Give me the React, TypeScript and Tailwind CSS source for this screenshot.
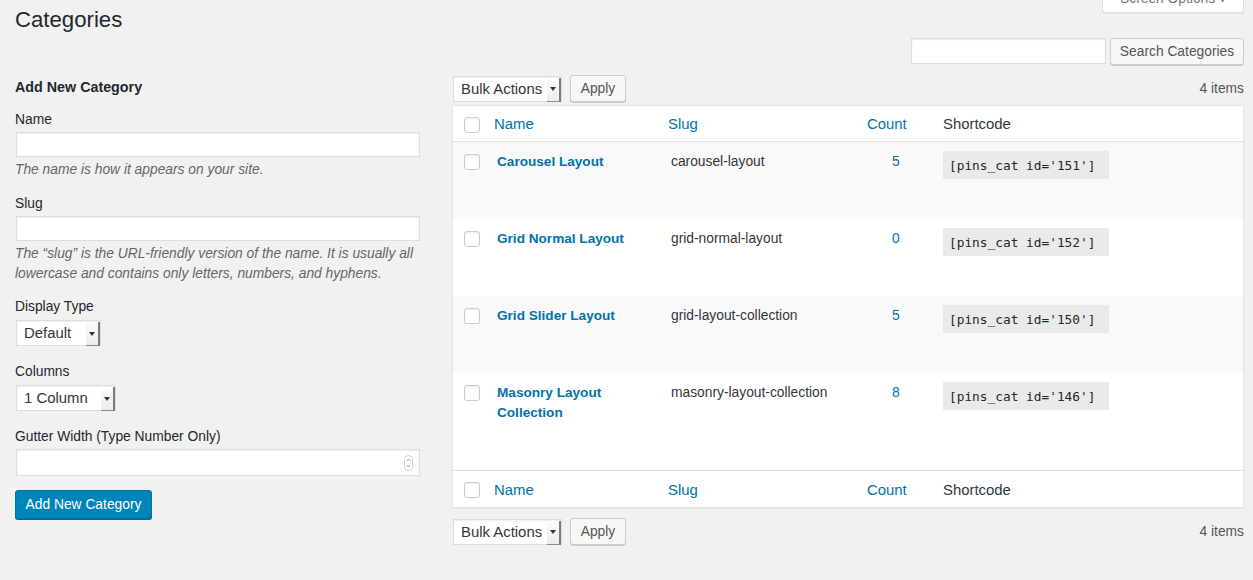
import React from "react";

const FONT = "font-['Liberation_Sans',Arial,sans-serif]";

function Select({ width, label }: { width: string; label: string }) {
  return (
    <div className={`flex h-[26px] ${width} bg-white border border-[#ddd] shadow-[inset_0_1px_2px_rgba(0,0,0,0.07)]`}>
      <div className="flex-1 flex items-center pl-[7px] pt-[1px] text-[14.9px] text-[#32373c] whitespace-nowrap">{label}</div>
      <div className="w-[14px] h-full flex items-center justify-center bg-gradient-to-b from-[#fcfcfc] to-[#ececec] border-r-2 border-b border-r-[#7a7a7a] border-b-[#8a8a8a] mt-[1px]">
        <svg width="6" height="4" viewBox="0 0 6 4">
          <path d="M0 0 L6 0 L3 4 Z" fill="#333" />
        </svg>
      </div>
    </div>
  );
}

function Button({ children, className = "" }: { children: React.ReactNode; className?: string }) {
  return (
    <button className={`h-[27px] pt-[1px] bg-[#f7f7f7] border border-[#ccc] rounded-[3px] shadow-[0_1px_0_#ccc] text-[13.8px] text-[#555] flex items-center justify-center whitespace-nowrap ${className}`}>
      {children}
    </button>
  );
}

function Checkbox() {
  return <div className="w-[16px] h-[16px] bg-white border border-[#c9cccf] rounded-[3px] shadow-[inset_0_1px_2px_rgba(0,0,0,0.08)]" />;
}

const rows = [
  { name: ["Carousel Layout"], slug: "carousel-layout", count: "5", id: "151" },
  { name: ["Grid Normal Layout"], slug: "grid-normal-layout", count: "0", id: "152" },
  { name: ["Grid Slider Layout"], slug: "grid-layout-collection", count: "5", id: "150" },
  { name: ["Masonry Layout", "Collection"], slug: "masonry-layout-collection", count: "8", id: "146" },
];

const GRID = "grid grid-cols-[33px_174px_198px_76px_1fr]";

function HeaderRow({ border }: { border: "top" | "bottom" }) {
  return (
    <div className={`${GRID} items-center text-[14.9px] ${border === "bottom" ? "h-[36px] pt-[2px] border-b border-[#e1e1e1]" : "h-[37px] pt-[2px] border-t border-[#e1e1e1]"}`}>
      <div className="pl-[11px] flex items-center"><Checkbox /></div>
      <div className="pl-[8px] text-[#0073aa]">Name</div>
      <div className="pl-[8px] text-[#0073aa]">Slug</div>
      <div className="pl-[9px] text-[#0073aa]">Count</div>
      <div className="pl-[9px] text-[#32373c]">Shortcode</div>
    </div>
  );
}

function TableNav({ className = "" }: { className?: string }) {
  return (
    <div className={`flex items-center ${className}`}>
      <div className="ml-px"><Select width="w-[109px]" label="Bulk Actions" /></div>
      <Button className="ml-[8px] w-[56px]">Apply</Button>
      <div className="ml-auto pt-[1px] text-[13.8px] text-[#555]">4 items</div>
    </div>
  );
}

export default function App() {
  return (
    <div className={`${FONT} min-h-[580px] bg-[#f1f1f1] pl-[15px] pr-[9px] text-[13.8px] text-[#23282d] overflow-hidden`}>
      <div className="flex justify-between items-start">
        <h1 className="pt-[5px] text-[22.2px] leading-[29px] text-[#23282d]">Categories</h1>
        <div className="mt-[-14px] w-[142px] h-[27px] bg-white border border-[#ddd] border-t-0 rounded-b-[3px] shadow-[0_1px_1px_rgba(0,0,0,0.06)] flex items-center justify-center text-[13.8px] text-[#72777c]">
          Screen Options ▾
        </div>
      </div>

      <div className="flex justify-end gap-[4px] mt-[4px]">
        <div className="w-[195px] h-[26px] bg-white border border-[#ddd] shadow-[inset_0_1px_2px_rgba(0,0,0,0.07)]" />
        <Button className="w-[134px]">Search Categories</Button>
      </div>

      <div className="flex mt-[10px]">
        <div className="w-[405px] shrink-0">
          <h2 className="mt-[2px] text-[14.3px] leading-[20px] font-bold text-[#23282d]">Add New Category</h2>
          <div className="mt-[14px] leading-[18px]">Name</div>
          <div className="mt-[3px] ml-px h-[25px] bg-white border border-[#ddd] shadow-[inset_0_1px_2px_rgba(0,0,0,0.07)]" />
          <p className="mt-[4px] leading-[18px] italic text-[#666]">The name is how it appears on your site.</p>
          <div className="mt-[16px] leading-[18px]">Slug</div>
          <div className="mt-[3px] ml-px h-[25px] bg-white border border-[#ddd] shadow-[inset_0_1px_2px_rgba(0,0,0,0.07)]" />
          <p className="mt-[3px] leading-[20px] italic text-[#666]">
            The “slug” is the URL-friendly version of the name. It is usually all lowercase and contains only letters, numbers, and hyphens.
          </p>
          <div className="mt-[14px] leading-[18px]">Display Type</div>
          <div className="mt-[4px] ml-px"><Select width="w-[85px]" label="Default" /></div>
          <div className="mt-[17px] leading-[18px]">Columns</div>
          <div className="mt-[4px] ml-px"><Select width="w-[100px]" label="1 Column" /></div>
          <div className="mt-[17px] leading-[18px]">Gutter Width (Type Number Only)</div>
          <div className="mt-[3px] ml-px h-[27px] bg-white border border-[#ddd] shadow-[inset_0_1px_2px_rgba(0,0,0,0.07)] flex items-center justify-end pr-[6px]">
            <svg width="9" height="16" viewBox="0 0 9 16">
              <rect x="0.5" y="0.5" width="8" height="15" rx="4" fill="#fff" stroke="#cfcfcf" />
              <path d="M2.5 6 L4.5 4 L6.5 6" stroke="#999" fill="none" strokeWidth="1" />
              <path d="M2.5 10 L4.5 12 L6.5 10" stroke="#999" fill="none" strokeWidth="1" />
            </svg>
          </div>
          <button className="mt-[14px] h-[29px] w-[137px] pt-[1px] bg-[#0085ba] border border-[#0073aa] rounded-[3px] shadow-[0_1px_0_#006799] text-[13.8px] text-white flex items-center justify-center whitespace-nowrap">
            Add New Category
          </button>
        </div>

        <div className="flex-1 ml-[32px]">
          <TableNav />
          <div className="mt-[3px] bg-white border border-[#e5e5e5] shadow-[0_1px_1px_rgba(0,0,0,0.04)]">
            <HeaderRow border="bottom" />
            {rows.map((r, i) => (
              <div key={r.id} className={`${GRID} items-start ${i % 2 === 0 ? "bg-[#f9f9f9]" : "bg-white"}`}>
                <div className="pl-[11px] pt-[12px]"><Checkbox /></div>
                <div className="pl-[11px] pt-[10px] pb-[47px] text-[13.6px] leading-[20px] font-bold text-[#0073aa]">
                  {r.name.map((n) => (
                    <div key={n}>{n}</div>
                  ))}
                </div>
                <div className="pl-[11px] pt-[10px] leading-[20px] text-[13.8px] text-[#32373c]">{r.slug}</div>
                <div className="pl-[34px] pt-[10px] leading-[20px] text-[13.8px] text-[#0073aa]">{r.count}</div>
                <div className="pl-[9px] pt-[9px]">
                  <code className="w-[166px] h-[28px] flex items-center pl-[6px] pt-[1px] bg-[#eaeaea] font-['DejaVu_Sans_Mono',monospace] text-[12.8px] text-[#23282d]">
                    [pins_cat id='{r.id}']
                  </code>
                </div>
              </div>
            ))}
            <HeaderRow border="top" />
          </div>
          <TableNav className="mt-[10px]" />
        </div>
      </div>
    </div>
  );
}
